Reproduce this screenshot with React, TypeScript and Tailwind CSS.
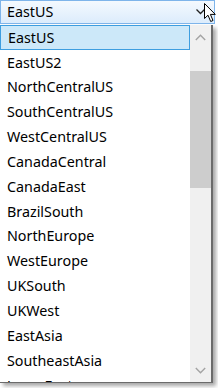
import React from 'react';

const regions = [
  'EastUS',
  'EastUS2',
  'NorthCentralUS',
  'SouthCentralUS',
  'WestCentralUS',
  'CanadaCentral',
  'CanadaEast',
  'BrazilSouth',
  'NorthEurope',
  'WestEurope',
  'UKSouth',
  'UKWest',
  'EastAsia',
  'SoutheastAsia',
  'JapanEast',
];

export default function App() {
  const selected = 'EastUS';

  return (
    <div
      className="relative w-[218px] h-[388px] overflow-hidden bg-white text-[14.3px] text-black"
      style={{ fontFamily: '"Noto Sans", "Open Sans", sans-serif' }}
    >
      {/* Combo box header */}
      <div className="relative flex items-center h-[24px] w-[215px] pl-[6px] border border-[#7eb4ea] bg-gradient-to-b from-[#f4f9fe] to-[#dcecfc]">
        <span className="leading-none">{selected}</span>
        <svg className="absolute left-[195px] top-[8px]" width="9" height="6" viewBox="0 0 9 6">
          <path d="M0.5 0.5 L4.5 4.5 L8.5 0.5" fill="none" stroke="#222" strokeWidth="1.3" />
        </svg>
        {/* Mouse cursor */}
        <svg className="absolute left-[203px] top-[2px]" width="13" height="20" viewBox="0 0 13 20">
          <path
            d="M0.5 0.5 L0.5 15.5 L4 12.2 L6.7 18.5 L9 17.5 L6.4 11.4 L11.3 11.4 Z"
            fill="#fff"
            stroke="#000"
            strokeWidth="1"
            strokeLinejoin="round"
          />
        </svg>
      </div>

      {/* Dropdown list */}
      <div className="flex h-[358px] w-[213px] mt-[1px] border-r-2 border-b border-[#6b6b6b] shadow-[3px_3px_4px_rgba(0,0,0,0.35)] bg-white">
        <div className="flex-1 overflow-hidden">
          {regions.map((r) => (
            <div
              key={r}
              className={`flex items-center h-[24.85px] pl-[7px] whitespace-nowrap ${
                r === selected ? 'bg-[#cce8f9] border border-[#3d9ee0] pl-[6px]' : ''
              }`}
            >
              {r}
            </div>
          ))}
        </div>

        {/* Scrollbar */}
        <div className="flex flex-col w-[21px] bg-[#f0f0f0]">
          <div className="flex items-center justify-center h-[24px]">
            <svg width="11" height="7" viewBox="0 0 11 7">
              <path d="M0.8 6 L5.5 1.3 L10.2 6" fill="none" stroke="#a3a3a3" strokeWidth="1.4" />
            </svg>
          </div>
          <div className="h-[22px]" />
          <div className="h-[117px] bg-[#cdcdcd]" />
          <div className="flex-1" />
          <div className="flex items-center justify-center h-[24px]">
            <svg width="11" height="7" viewBox="0 0 11 7">
              <path d="M0.8 1 L5.5 5.7 L10.2 1" fill="none" stroke="#a3a3a3" strokeWidth="1.4" />
            </svg>
          </div>
        </div>
      </div>
    </div>
  );
}
